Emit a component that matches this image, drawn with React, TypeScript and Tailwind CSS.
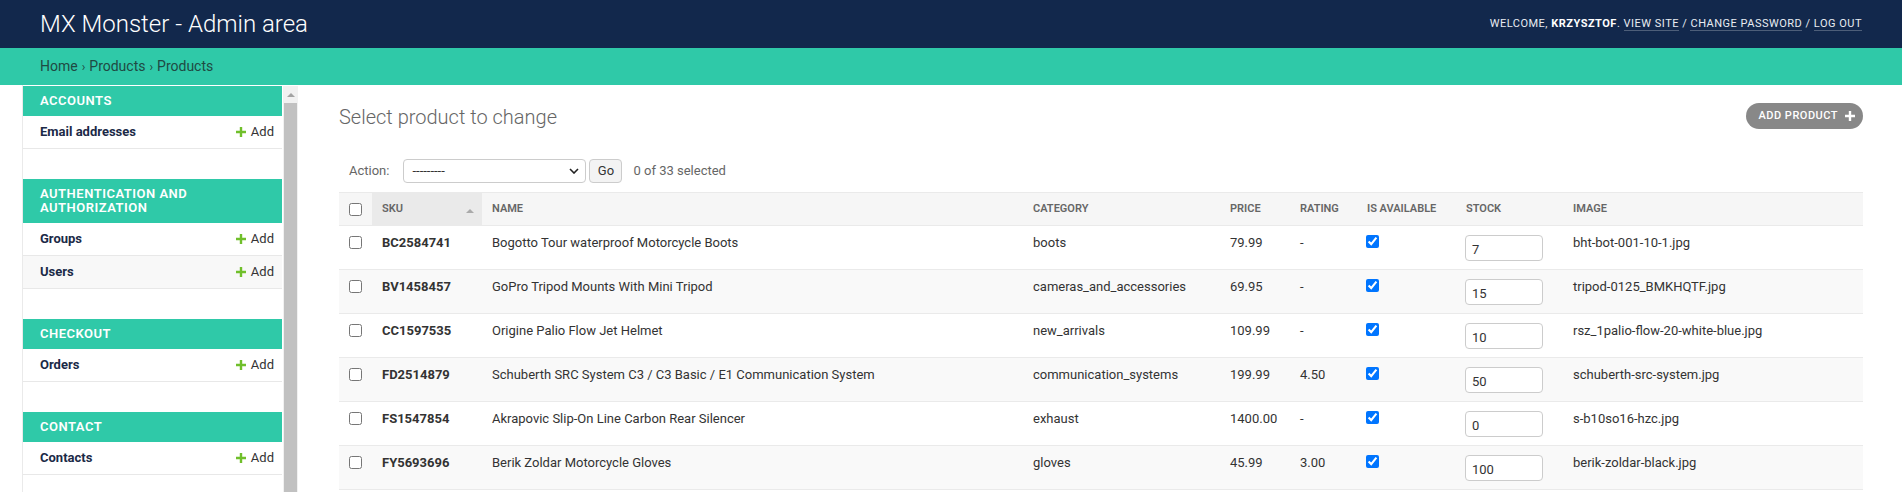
import React from "react";

type Product = {
  sku: string;
  name: string;
  category: string;
  price: string;
  rating: string;
  stock: string;
  image: string;
};

const products: Product[] = [
  { sku: "BC2584741", name: "Bogotto Tour waterproof Motorcycle Boots", category: "boots", price: "79.99", rating: "-", stock: "7", image: "bht-bot-001-10-1.jpg" },
  { sku: "BV1458457", name: "GoPro Tripod Mounts With Mini Tripod", category: "cameras_and_accessories", price: "69.95", rating: "-", stock: "15", image: "tripod-0125_BMKHQTF.jpg" },
  { sku: "CC1597535", name: "Origine Palio Flow Jet Helmet", category: "new_arrivals", price: "109.99", rating: "-", stock: "10", image: "rsz_1palio-flow-20-white-blue.jpg" },
  { sku: "FD2514879", name: "Schuberth SRC System C3 / C3 Basic / E1 Communication System", category: "communication_systems", price: "199.99", rating: "4.50", stock: "50", image: "schuberth-src-system.jpg" },
  { sku: "FS1547854", name: "Akrapovic Slip-On Line Carbon Rear Silencer", category: "exhaust", price: "1400.00", rating: "-", stock: "0", image: "s-b10so16-hzc.jpg" },
  { sku: "FY5693696", name: "Berik Zoldar Motorcycle Gloves", category: "gloves", price: "45.99", rating: "3.00", stock: "100", image: "berik-zoldar-black.jpg" },
];

const modules = [
  { title: "Accounts", items: ["Email addresses"] },
  { title: "Authentication and Authorization", items: ["Groups", "Users"] },
  { title: "Checkout", items: ["Orders"] },
  { title: "Contact", items: ["Contacts"] },
];

function Plus({ className = "" }: { className?: string }) {
  return (
    <svg viewBox="0 0 10 10" className={className} aria-hidden>
      <path d="M3.8 0h2.4v3.8H10v2.4H6.2V10H3.8V6.2H0V3.8h3.8z" fill="currentColor" />
    </svg>
  );
}

function Sidebar() {
  return (
    <div className="flex w-[275px] shrink-0">
      <nav className="w-[259px] mt-[1px] mr-[1px]">
        {modules.map((m) => (
          <div key={m.title} className="mb-[30px]">
            <div className="bg-[#2fc9a8] text-white text-[13px] leading-[14px] font-semibold uppercase tracking-[0.5px] pl-[17px] pr-[8px] py-[8px]">
              {m.title}
            </div>
            {m.items.map((item, i) => (
              <div
                key={item}
                className={`flex items-center justify-between h-[33px] pl-[17px] pr-[8px] border-b border-[#e8e8e8] text-[13px] ${i % 2 === 1 ? "bg-[#f8f8f8]" : "bg-white"}`}
              >
                <span className="font-bold text-[#1b2a47]">{item}</span>
                <span className="flex items-center gap-[5px] text-[#333]">
                  <Plus className="w-[10px] h-[10px] text-[#70bf2b]" />
                  Add
                </span>
              </div>
            ))}
          </div>
        ))}
      </nav>
      {/* scrollbar */}
      <div className="w-[15px] mt-[1px] bg-[#f1f1f1] flex flex-col">
        <div className="h-[17px] flex items-center justify-center">
          <svg viewBox="0 0 8 4" className="w-[8px] h-[4px]" aria-hidden>
            <path d="M0 4L4 0l4 4z" fill="#a3a3a3" />
          </svg>
        </div>
        <div className="flex-1 mx-[1px] bg-[#c1c1c1]" />
      </div>
    </div>
  );
}

const th = "px-[10px] text-left text-[11px] font-semibold uppercase text-[#666] align-middle whitespace-nowrap";
const td = "px-[10px] pt-[9px] align-top text-[13px] leading-[16px] text-[#333]";

function ProductTable() {
  return (
    <table className="w-full table-fixed border-collapse">
      <colgroup>
        <col className="w-[33px]" />
        <col className="w-[110px]" />
        <col className="w-[541px]" />
        <col className="w-[197px]" />
        <col className="w-[70px]" />
        <col className="w-[67px]" />
        <col className="w-[99px]" />
        <col className="w-[107px]" />
        <col />
      </colgroup>
      <thead>
        <tr className="h-[33px] bg-[#f6f6f6] border-t border-b border-[#eaeaea]">
          <th className="pl-[10px] align-middle">
            <input type="checkbox" className="block w-[13px] h-[13px]" />
          </th>
          <th className={`${th} bg-[#eaeaea] pr-[8px]`}>
            <div className="flex items-center justify-between">
              <span>SKU</span>
              <svg viewBox="0 0 8 4" className="w-[8px] h-[4px] mt-[4px]" aria-hidden>
                <path d="M0 4L4 0l4 4z" fill="#aaa" />
              </svg>
            </div>
          </th>
          <th className={th}>Name</th>
          <th className={th}>Category</th>
          <th className={th}>Price</th>
          <th className={th}>Rating</th>
          <th className={th}>Is available</th>
          <th className={th}>Stock</th>
          <th className={th}>Image</th>
        </tr>
      </thead>
      <tbody>
        {products.map((p, i) => (
          <tr key={p.sku} className={`h-[44px] border-b border-[#eaeaea] ${i % 2 === 1 ? "bg-[#f9f9f9]" : "bg-white"}`}>
            <td className="pl-[10px] pt-[10px] align-top">
              <input type="checkbox" className="block w-[13px] h-[13px]" />
            </td>
            <td className={`${td} font-bold text-[#1b2a47]`}>{p.sku}</td>
            <td className={td}>{p.name}</td>
            <td className={td}>{p.category}</td>
            <td className={td}>{p.price}</td>
            <td className={td}>{p.rating}</td>
            <td className="px-[9px] pt-[9px] align-top">
              <input type="checkbox" defaultChecked className="block w-[13px] h-[13px]" />
            </td>
            <td className="pl-[9px] pt-[9px] align-top">
              <input
                type="text"
                defaultValue={p.stock}
                className="block w-[78px] h-[26px] px-[6px] pt-[3px] border border-[#ccc] rounded-[4px] bg-white text-[13px] text-[#333] outline-none"
              />
            </td>
            <td className={td}>{p.image}</td>
          </tr>
        ))}
      </tbody>
    </table>
  );
}

export default function App() {
  return (
    <div className="font-['Roboto','Liberation_Sans',sans-serif] bg-white h-[492px] overflow-hidden">
      {/* Header */}
      <header className="h-[48px] bg-[#12284c] flex items-center justify-between px-[40px]">
        <h1 className="text-[24px] font-light text-white leading-none">MX Monster - Admin area</h1>
        <div className="text-[11px] uppercase tracking-[0.5px] text-[#e8ecf2]">
          Welcome, <strong className="font-bold text-white">Krzysztof</strong>.{" "}
          <a className="border-b border-white/25">View site</a> /{" "}
          <a className="border-b border-white/25">Change password</a> /{" "}
          <a className="border-b border-white/25">Log out</a>
        </div>
      </header>

      {/* Breadcrumbs */}
      <div className="h-[37px] bg-[#2fc9a8] flex items-center px-[40px] text-[14px] text-[#1f4a43]">
        Home <span className="mx-[4px] text-[12px]">›</span> Products <span className="mx-[4px] text-[12px]">›</span> Products
      </div>

      <div className="flex h-[407px] overflow-hidden">
        <div className="w-[23px] shrink-0 border-r border-[#eaeaea]" />
        <Sidebar />

        {/* Content */}
        <main className="flex-1 min-w-0 pl-[41px] pr-[39px] pt-[18px]">
          <div className="flex items-start justify-between">
            <h2 className="mt-[2px] text-[20px] leading-[24px] font-light text-[#666]">Select product to change</h2>
            <button className="flex items-center gap-[7px] h-[26px] pl-[12px] pr-[8px] rounded-full bg-[#888] text-white text-[11px] font-medium uppercase tracking-[0.5px]">
              Add product
              <Plus className="w-[10px] h-[10px]" />
            </button>
          </div>

          <div className="flex items-center h-[24px] mt-[30px] mb-[9px] pl-[10px] text-[13px]">
            <span className="text-[#666]">Action:</span>
            <div className="relative ml-[14px] w-[183px] h-[24px] border border-[#ccc] rounded-[4px] bg-white flex items-center px-[8px] text-[#333]">
              <span className="text-[13px]">---------</span>
              <svg viewBox="0 0 10 6" className="absolute right-[6px] top-[8px] w-[10px] h-[6px]" aria-hidden>
                <path d="M1 1l4 4 4-4" fill="none" stroke="#222" strokeWidth="1.6" />
              </svg>
            </div>
            <button className="ml-[3px] h-[24px] w-[33px] border border-[#ccc] rounded-[4px] bg-[#f3f3f3] text-[#333] text-[13px]">
              Go
            </button>
            <span className="ml-[11px] text-[#666]">0 of 33 selected</span>
          </div>

          <ProductTable />
        </main>
      </div>
    </div>
  );
}
